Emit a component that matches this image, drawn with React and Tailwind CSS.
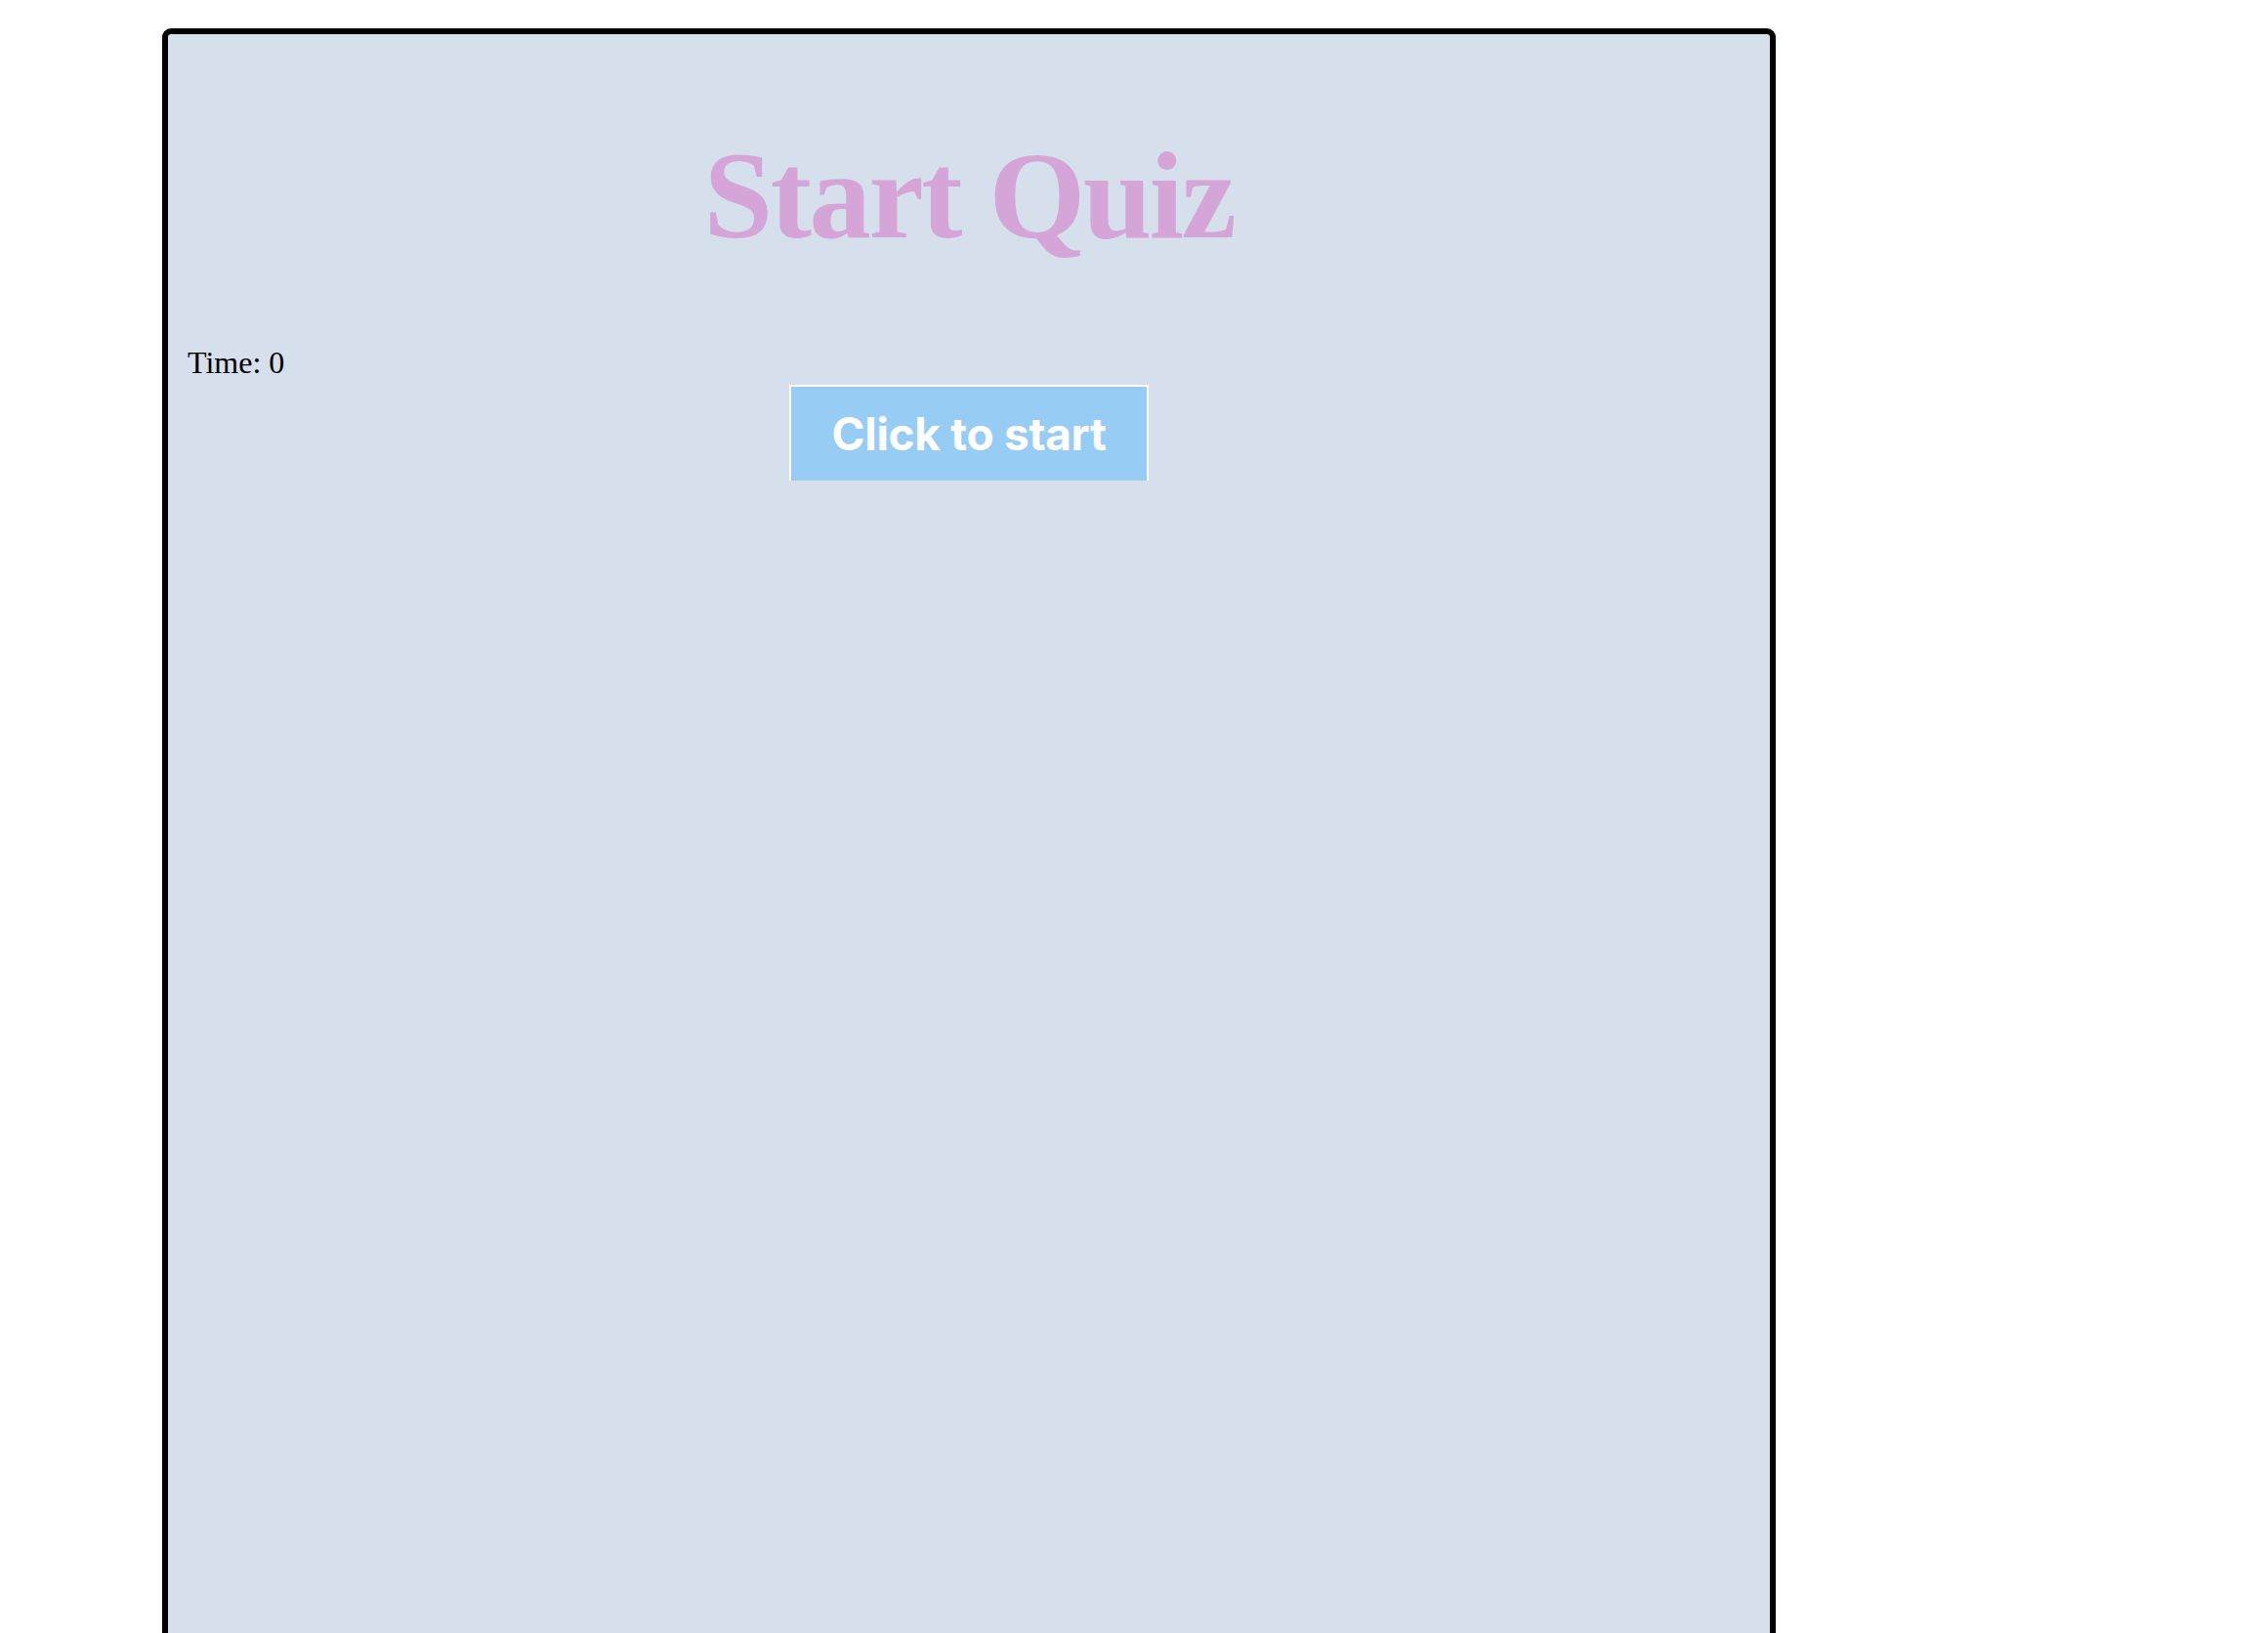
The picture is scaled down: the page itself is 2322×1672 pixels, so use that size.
const App = () => {
  return (
    <div className="min-h-screen bg-white pt-[29px] pl-[166px]">
      {/* Quiz panel */}
      <div className="w-[1652px] h-[1720px] rounded-[9px] border-[6px] border-black bg-[#d6e0ec]">
        <h1
          className="mt-[102px] text-center text-[127px] leading-none font-bold tracking-[-2.5px] text-[#d5a5d8]"
          style={{ fontFamily: '"Liberation Serif", "Times New Roman", serif' }}
        >
          Start Quiz
        </h1>

        <p
          className="mt-[91px] pl-[20px] text-[32px] leading-none text-black"
          style={{ fontFamily: '"Liberation Serif", "Times New Roman", serif' }}
        >
          Time: 0
        </p>

        <div className="mt-[7px] flex justify-center">
          <button
            className="flex h-[98px] w-[368px] items-center justify-center border-2 border-b-0 border-white bg-[#97cdf5] text-[46px] font-bold tracking-[-0.3px] text-white"
            style={{ fontFamily: 'Inter, "Noto Sans", sans-serif' }}
          >
            Click to start
          </button>
        </div>
      </div>
    </div>
  );
};

export default App;
